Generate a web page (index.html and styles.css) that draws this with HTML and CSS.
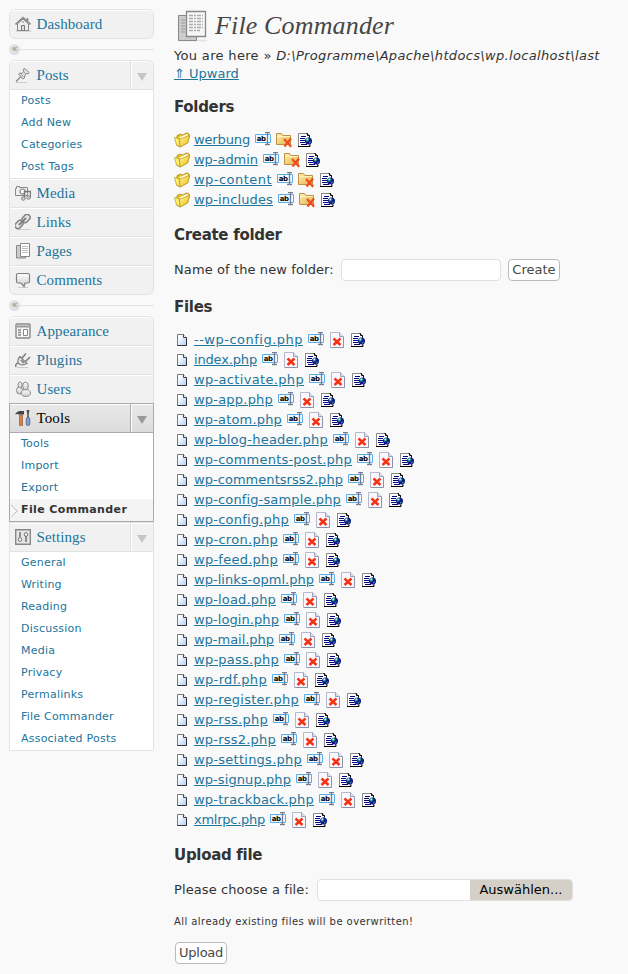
FILE: index.html
```html
<!DOCTYPE html>
<html lang="en">
<head>
<meta charset="utf-8">
<title>File Commander</title>
<link rel="stylesheet" href="styles.css">
</head>
<body>
<svg class="defs" aria-hidden="true">
  <defs>
    <linearGradient id="gold" x1="0" y1="0" x2="1" y2="1"><stop offset="0" stop-color="#fff7a8"/><stop offset="1" stop-color="#eeb800"/></linearGradient>
    <linearGradient id="tan" x1="0" y1="0" x2="1" y2="1"><stop offset="0" stop-color="#fff0bd"/><stop offset="1" stop-color="#e2b23e"/></linearGradient>
    <linearGradient id="sheet" x1="0" y1="0" x2="1" y2="1"><stop offset="0.2" stop-color="#fff"/><stop offset="1" stop-color="#a9cdf5"/></linearGradient>
    <linearGradient id="grey" x1="0" y1="0" x2="0" y2="1"><stop offset="0" stop-color="#fff"/><stop offset="1" stop-color="#ccc"/></linearGradient>
  </defs>
  <symbol id="folder" viewBox="0 0 16 16">
    <path d="M3 3.500L7 2L8.500 3L13 .8L15.300 2.300V5L13.500 11L6 15L2.500 13Z" fill="#e9c21a" stroke="#a88b22" stroke-width=".8"/>
    <path d="M5 5.500L13 2L14.500 3L7 6.800Z" fill="#fffbe0"/>
    <path d="M.5 5.500L5 6.500L6 14.500L2.500 13Z" fill="#fff06a" stroke="#a88b22" stroke-width=".6"/>
    <path d="M5.700 7.300L15.600 3.500L13.500 11L6 15Z" fill="url(#gold)" stroke="#b9951c" stroke-width=".6"/>
  </symbol>
  <symbol id="file" viewBox="0 0 16 16">
    <path d="M3.500 2.500H9.500L12.500 5.500V13.500H3.500Z" fill="url(#sheet)" stroke="#777"/>
    <path d="M12.500 5.500V13.500H3.500" fill="none" stroke="#333"/>
    <path d="M9.500 2.500V5.500H12.500" fill="#fff" stroke="#444"/>
  </symbol>
  <symbol id="rename" viewBox="0 0 16 16">
    <path d="M0 0H16V14H0Z" fill="#fff"/>
    <path d="M.5 2.500H15.500V10.500H.5Z" fill="#f4faff" stroke="#58aee8"/>
    <path d="M10 .5H12L12.500 1L13 .5H15M12.500 1V12M10 12.500H12L12.500 12L13 12.500H15" fill="none" stroke="#777b92" stroke-width="1.300"/>
    <text x="1.700" y="8.900" class="ab">ab</text>
  </symbol>
  <symbol id="folder-delete" viewBox="0 0 16 16">
    <path d="M.5 1.500H5.500L7 3.500H14.500V12.500H.5Z" fill="url(#tan)" stroke="#bd9140"/>
    <path d="M1 4.500H14" stroke="#fff1bd"/>
    <path d="M8 7L15.200 14.700M15 6.500L8.500 14.500" stroke="#f04a20" stroke-width="2.200"/>
  </symbol>
  <symbol id="file-delete" viewBox="0 0 16 16">
    <path d="M1.500 .5H10.500L14.500 4.500V15.500H1.500Z" fill="#f7f9ff" stroke="#b4b9cd"/>
    <path d="M10.500 .5V4.500H14.500" fill="#dde2f0" stroke="#9aa1ba"/>
    <path d="M14.500 5V15.500H2" fill="none" stroke="#8c92a8"/>
    <path d="M4.500 6.500L11.500 13M11.500 6.500L4.500 13" stroke="#f53213" stroke-width="2.500"/>
  </symbol>
  <symbol id="view" viewBox="0 0 16 16">
    <path d="M1.500 1.500H10.500L12.500 3.500V14.500H1.500Z" fill="#fff" stroke="#888"/>
    <path d="M9.500 1.500H10.500V3.500H12.500V5.500M1 14.500H13V12.500" fill="none" stroke="#000"/>
    <path d="M4 4.500H9M3 6.500H8M3 8.500H8M3 10.500H8M4 12.500H10" stroke="#000080"/>
    <circle cx="11.500" cy="9" r="3.500" fill="#12128c"/>
    <path d="M9 7L11 5.800L12.500 7.500L11 9.500L9 9.500ZM12 10L14 9.500L12.500 12Z" fill="#27a77c"/>
    <path d="M9.500 6.500H11V8H9.500Z" fill="#bff"/>
  </symbol>
  <symbol id="pages" viewBox="0 0 32 32">
    <path d="M3 30.500H31" stroke="#e2e2e2" stroke-width="1.500"/>
    <path d="M2.500 5.500H20.500V30.500H2.500Z" fill="#ccc" stroke="#888"/>
    <path d="M5 10H9M5 13H9M5 16H9M5 19H9M5 22H9" stroke="#999"/>
    <path d="M10.500 1.500H29.500V26.500H10.500Z" fill="#f7f7f7" stroke="#888" stroke-width="1.300"/>
    <path d="M13 5.500H27M13 8.500H27M13 11.500H27M13 14.500H27M13 17.500H27M13 20.500H24" stroke="#aaa" stroke-width="1.400" stroke-dasharray="4 1 2 1"/>
  </symbol>
  <symbol id="m-home" viewBox="0 0 16 16">
    <path d="M1 15H16" stroke="#bbb"/><path d="M2.500 8V14.500H13.500V8L8 3Z" fill="#eee" stroke="#888"/>
    <path d="M.5 8.500L8 1.500L15.500 8.500M12.500 5V2" fill="none" stroke="#888" stroke-width="1.600"/>
    <path d="M6.500 14V9.500H9.500V14" fill="#ddd" stroke="#777"/><path d="M7 6H9" stroke="#888"/>
  </symbol>
  <symbol id="m-pin" viewBox="0 0 16 16">
    <path d="M1 15.500H12" stroke="#ccc"/><path d="M1 14.500L6 9.500" stroke="#888" stroke-width="1.300"/>
    <path d="M8 2.500L10 1.500L14 5.500L13 7L11.500 6.500L9.500 9V11L8 12L3.500 7L5 6L7 6.500L9 4Z" fill="#e2e2e2" stroke="#888"/><path d="M9 5L11 7M6 7L8.500 9.500" stroke="#999"/>
  </symbol>
  <symbol id="m-media" viewBox="0 0 16 16">
    <path d="M.5 3.500H1.500V1.500H4.500V2.500H12.500V10.500H.5Z" fill="#eee" stroke="#888"/><circle cx="7.500" cy="6.500" r="2.500" fill="#fff" stroke="#888" stroke-width="1.200"/>
    <path d="M9.500 14V6.500H15.500V13" fill="none" stroke="#777" stroke-width="1.400"/><circle cx="8.300" cy="13.500" r="1.800" fill="#ccc" stroke="#888"/><circle cx="13.500" cy="12.500" r="1.800" fill="#ccc" stroke="#888"/>
  </symbol>
  <symbol id="m-link" viewBox="0 0 16 16">
    <path d="M3 15.500H16" stroke="#ccc"/>
    <g fill="#e4e4e4" stroke="#808080" stroke-width="1.400"><rect x="-.5" y="7.500" width="9" height="6" rx="3" transform="rotate(-45 4 10.500)"/><rect x="6.500" y="1.500" width="9" height="6" rx="3" transform="rotate(-45 11 4.500)"/><path d="M4 11L11 4" stroke-width="2"/></g>
  </symbol>
  <symbol id="m-pages" viewBox="0 0 16 16">
    <path d="M1.500 2.500H10.500V15H1.500Z" fill="#ccc" stroke="#888"/><path d="M5.500 .5H14.500V13.500H5.500Z" fill="#fff" stroke="#888"/>
    <path d="M7 3.500H13M7 5.500H13M7 7.500H13M7 9.500H13" stroke="#bbb"/>
  </symbol>
  <symbol id="m-comment" viewBox="0 0 16 16">
    <path d="M3 15.500H13" stroke="#ccc"/><path d="M3 1.500H13Q14.500 1.500 14.500 3V9.500Q14.500 11 13 11H10L9 14.500L6 11H3Q1.500 11 1.500 9.500V3Q1.500 1.500 3 1.500Z" fill="url(#grey)" stroke="#808080" stroke-width="1.200"/>
  </symbol>
  <symbol id="m-appearance" viewBox="0 0 16 16">
    <rect x="1" y="1" width="14" height="14" rx="1" fill="#f5f5f5" stroke="#888" stroke-width="1.400"/><path d="M2 3.500H14" stroke="#999" stroke-width="2"/>
    <path d="M3 7H6M3 9.500H6M3 12H6" stroke="#888" stroke-width="1.600"/><path d="M8.500 6.500H12.500V12.500H8.500Z" fill="#fff" stroke="#888"/>
  </symbol>
  <symbol id="m-plug" viewBox="0 0 16 16">
    <path d="M2 15.500H13" stroke="#ccc"/><path d="M1 15Q0 12 3 11" fill="none" stroke="#808080" stroke-width="1.500"/>
    <path d="M5 4.500L12 11.500Q8 13.500 5 12.500L3 11Q2.500 7 5 4.500Z" fill="#e5e5e5" stroke="#808080" stroke-width="1.200"/><path d="M7 6L11 1.500M10.500 9.500L15 5M6 8L9 11" stroke="#808080" stroke-width="1.700"/>
  </symbol>
  <symbol id="m-users" viewBox="0 0 16 16">
    <g fill="url(#grey)" stroke="#8a8a8a"><ellipse cx="4.500" cy="9.500" rx="3" ry="3.500"/><ellipse cx="5" cy="4" rx="2" ry="3"/><ellipse cx="10.800" cy="12" rx="4.700" ry="3.500"/><ellipse cx="10.500" cy="5" rx="2.800" ry="4"/></g>
  </symbol>
  <symbol id="m-tools" viewBox="0 0 16 16">
    <path d="M4.500 5H7.500V15.500H4.500Z" fill="#d98245" stroke="#8f481c" stroke-width=".6"/><path d="M0 4.500Q2 1 5 1H9V4.500H4Q2 3.500 0 4.500Z" fill="#444"/>
    <path d="M11.500 0H14.500L13.800 4V8H12.200V4Z" fill="#555"/><rect x="11.300" y="7.500" width="3.500" height="8" rx="1.500" fill="#7da5d2" stroke="#3b5779" stroke-width=".7"/>
  </symbol>
  <symbol id="m-settings" viewBox="0 0 16 16">
    <path d="M.7 .7H15.300V15.300H.7Z" fill="#e6e6e6" stroke="#888" stroke-width="1.400"/><path d="M5 3V8M11 7V13" stroke="#777" stroke-width="1.600"/>
    <circle cx="5" cy="10.500" r="1.800" fill="#fff" stroke="#666"/><circle cx="11" cy="5.500" r="1.800" fill="#fff" stroke="#666"/>
  </symbol>
</svg>
<div class="page">
  <nav class="menu">
    <div class="group">
      <a class="head"><svg><use href="#m-home"/></svg>Dashboard</a>
    </div>
    <div class="separator"><span>«</span></div>
    <div class="group">
      <a class="head"><svg><use href="#m-pin"/></svg>Posts<i class="toggle"></i></a>
      <div class="sub"><a>Posts</a><a>Add New</a><a>Categories</a><a>Post Tags</a></div>
      <a class="head"><svg><use href="#m-media"/></svg>Media</a>
      <a class="head"><svg><use href="#m-link"/></svg>Links</a>
      <a class="head"><svg><use href="#m-pages"/></svg>Pages</a>
      <a class="head"><svg><use href="#m-comment"/></svg>Comments</a>
    </div>
    <div class="separator"><span>«</span></div>
    <div class="group square">
      <a class="head"><svg><use href="#m-appearance"/></svg>Appearance</a>
      <a class="head"><svg><use href="#m-plug"/></svg>Plugins</a>
      <a class="head"><svg><use href="#m-users"/></svg>Users</a>
      <div class="open">
        <a class="head"><svg><use href="#m-tools"/></svg>Tools<i class="toggle"></i></a>
        <div class="sub"><a>Tools</a><a>Import</a><a>Export</a><a class="current">File Commander</a></div>
      </div>
      <a class="head"><svg><use href="#m-settings"/></svg>Settings<i class="toggle"></i></a>
      <div class="sub"><a>General</a><a>Writing</a><a>Reading</a><a>Discussion</a><a>Media</a><a>Privacy</a><a>Permalinks</a><a>File Commander</a><a>Associated Posts</a></div>
    </div>
  </nav>
  <main>
    <h1><svg><use href="#pages"/></svg><span>File Commander</span></h1>
    <p class="path">You are here » <em>D:\Programme\Apache\htdocs\wp.localhost\last</em></p>
    <p class="up"><a class="link">⇑ Upward</a></p>
    <h3>Folders</h3>
    <ul id="folders"></ul>
    <h3>Create folder</h3>
    <div class="form"><label for="name">Name of the new folder:</label><input id="name" type="text"><button>Create</button></div>
    <h3>Files</h3>
    <ul id="files"></ul>
    <h3>Upload file</h3>
    <div class="form"><label>Please choose a file:</label><div class="chooser"><span>Auswählen...</span></div></div>
    <p class="note">All already existing files will be overwritten!</p>
    <button class="upload">Upload</button>
  </main>
</div>
<script src="script.js"></script>
</body>
</html>
```
FILE: styles.css
```css
* { box-sizing: border-box; }
body { margin: 0; background: #f9f9f9; color: #333; font: 13px/18px "DejaVu Sans", Verdana, sans-serif; }
.defs { position: absolute; width: 0; height: 0; }
.ab { font: bold 7px "DejaVu Sans", sans-serif; fill: #000; letter-spacing: -.4px; }
.page { display: flex; height: 974px; overflow: hidden; }
.menu { width: 145px; margin: 9px 20px 0 9px; flex: none; }
.group { border: 1px solid #e3e3e3; border-radius: 6px; background: #f1f1f1; overflow: hidden; }
.group.square { border-radius: 6px 6px 0 0; overflow: visible; }
.head { display: flex; align-items: center; height: 29px; padding: 0 0 1px 5px; border-top: 1px solid #e3e3e3; box-shadow: inset 0 1px #fff; color: #21759b; font: 15px/20px "Liberation Serif", serif; letter-spacing: .1px; }
.head:first-child { border-top: 0; height: 28px; }
.group > .head:first-child { border-radius: 5px 5px 0 0; }
.head svg { width: 16px; height: 16px; margin-right: 5.5px; }
.toggle { margin-left: auto; width: 23px; height: 28px; border-left: 1px solid #e1e1e1; box-shadow: inset 1px 0 #fff; display: grid; place-items: center; }
.toggle::after { content: ""; margin-top: 4px; border: 5px solid transparent; border-top: 8px solid #c6c6c6; border-bottom: 0; }
.sub { background: #fff; border-top: 1px solid #e3e3e3; }
.sub a { display: block; height: 22px; padding-left: 11px; font-size: 11px; line-height: 22px; color: #21759b; letter-spacing: .22px; }
.open { margin: 0 -1px; border: 1px solid #aaa; }
.open .head { color: #000; background: linear-gradient(#e9e9e9, #dcdcdc); }
.open .toggle { border-color: #aaa; }
.open .toggle::after { border-top-color: #999; }
.open .sub { border-color: #aaa; }
.open .sub .current { position: relative; background: #f4f4f4; color: #333; font-weight: bold; letter-spacing: .38px; }
.current::before { content: ""; position: absolute; left: -4px; top: 7px; width: 8px; height: 8px; transform: rotate(45deg); border: 1px solid; border-color: #bbb #bbb transparent transparent; background: #f9f9f9; clip-path: polygon(0 0, 100% 0, 100% 100%); }
.separator { height: 21px; display: flex; align-items: center; }
.separator::after { content: ""; flex: 1; border-top: 1px solid #e3e3e3; }
.separator span { width: 11px; height: 11px; border-radius: 50%; background: #e0e0e0; color: #888; font-size: 10px; line-height: 9px; text-align: center; }
main { width: 454px; }
h1 { display: flex; align-items: center; height: 38px; margin: 9px 0 0; font: italic 26px/34px "Liberation Serif", serif; color: #464646; letter-spacing: .15px; }
h1 svg { width: 32px; height: 32px; margin: 0 7px 4px 2px; }
h1 span { margin-bottom: 4px; }
p { margin: 0; white-space: nowrap; }
.path { height: 18px; letter-spacing: .33px; }
.link { color: #21759b; text-decoration: underline; }
h3 { height: 48px; margin: 0; font-size: 15px; line-height: 50px; letter-spacing: -.3px; }
.up { height: 18px; margin-bottom: -1px; }
ul { list-style: none; margin: 0; padding: 0; }
li { display: flex; align-items: center; height: 20px; gap: 5px; white-space: nowrap; }
li svg { width: 16px; height: 16px; flex: none; margin-bottom: 1px; }
li svg:first-child { margin-right: -1px; }
.form { display: flex; align-items: center; height: 22px; margin: 1px 0; }
.form label { letter-spacing: .1px; }
input { width: 160px; height: 22px; margin: 0 7px 0 7.5px; border: 1px solid #dfdfdf; border-radius: 4px; background: #fff; }
button { height: 22px; padding: 0 3px; border: 1px solid #bbb; border-radius: 4px; background: #fff; color: #464646; font: 13px/18px "DejaVu Sans", sans-serif; }
.chooser { display: flex; justify-content: flex-end; width: 256px; height: 22px; margin-left: 8px; border: 1px solid #dfdfdf; border-radius: 4px; background: #fff; overflow: hidden; }
.chooser span { width: 102px; background: #d4d0c8; color: #000; line-height: 20px; text-align: center; }
.note { margin-top: 12px; font-size: 10px; letter-spacing: .43px; }
.upload { margin: 11px 0 0 1px; letter-spacing: -.25px; }
```
FILE: script.js
```js
// Each entry: name and the width of its link in pixels.
const folders = [["werbung", 56], ["wp-admin", 64], ["wp-content", 78], ["wp-includes", 79]];
const files = [
  ["--wp-config", 109], ["index", 63], ["wp-activate", 110], ["wp-app", 79], ["wp-atom", 88],
  ["wp-blog-header", 134], ["wp-comments-post", 158], ["wp-commentsrss2", 149], ["wp-config-sample", 147],
  ["wp-config", 95], ["wp-cron", 84], ["wp-feed", 84], ["wp-links-opml", 120], ["wp-load", 82],
  ["wp-login", 85], ["wp-mail", 80], ["wp-pass", 85], ["wp-rdf", 73], ["wp-register", 105],
  ["wp-rss", 74], ["wp-rss2", 82], ["wp-settings", 108], ["wp-signup", 97], ["wp-trackback", 120], ["xmlrpc", 71]
];
const icon = id => `<svg><use href="#${id}"/></svg>`;
const row = (name, width, type) => `<li>${icon(type)}<a class="link" data-width="${width}">${name}</a>${icon("rename")}${icon(type + "-delete")}${icon("view")}</li>`;
document.getElementById("folders").innerHTML = folders.map(([n, w]) => row(n, w, "folder")).join("");
document.getElementById("files").innerHTML = files.map(([n, w]) => row(n + ".php", w, "file")).join("");

document.querySelectorAll("[data-width]").forEach(a => {
  const spare = a.dataset.width - a.getBoundingClientRect().width;
  a.style.letterSpacing = spare / a.textContent.length + "px";
  a.style.width = a.dataset.width + "px";
});
```
